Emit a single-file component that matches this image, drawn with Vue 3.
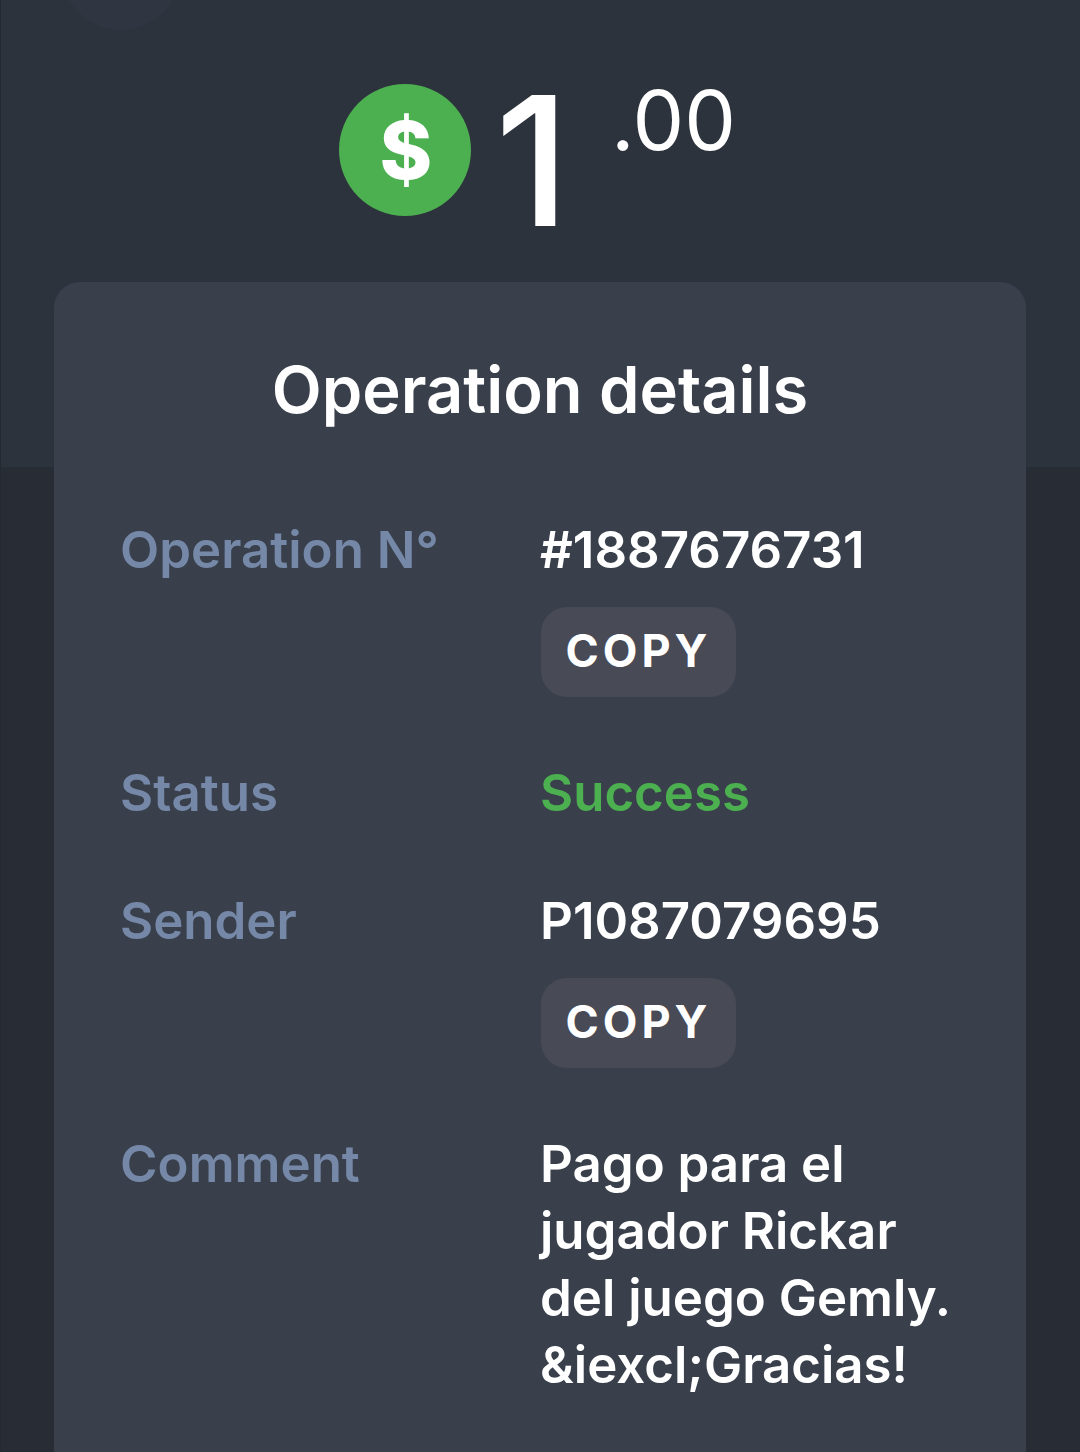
<template>
  <div class="page">
    <div class="header-bg">
      <div class="avatar-edge"></div>
    </div>
    <div class="amount">
      <div class="coin"><span>$</span></div>
      <div class="whole">1</div>
      <div class="cents">.00</div>
    </div>
    <div class="card">
      <h1 class="title">Operation details</h1>
      <div class="row" v-for="row in rows" :key="row.label">
        <div class="label">{{ row.label }}</div>
        <div class="value">
          <div :class="{ success: row.success }">
            <div v-for="line in row.lines" :key="line">{{ line }}</div>
          </div>
          <button v-if="row.copy" type="button" class="copy">COPY</button>
        </div>
      </div>
    </div>
  </div>
</template>

<script setup>
const rows = [
  { label: "Operation N°", lines: ["#1887676731"], copy: true },
  { label: "Status", lines: ["Success"], success: true },
  { label: "Sender", lines: ["P1087079695"], copy: true },
  {
    label: "Comment",
    lines: ["Pago para el", "jugador Rickar", "del juego Gemly.", "&iexcl;Gracias!"],
  },
];
</script>

<style>
html,
body {
  margin: 0;
  background: #282c35;
  overflow: hidden;
}
</style>

<style scoped>
.page {
  position: relative;
  width: 1080px;
  height: 1452px;
  overflow: hidden;
  font-family: Inter, "Open Sans", sans-serif;
  color: #fff;
  box-sizing: border-box;
  padding-top: 84px;
  background: #282c35;
  border-left: 1px solid #232935;
}
.header-bg {
  position: absolute;
  left: 0;
  right: 0;
  top: 0;
  height: 467px;
  background: #2d333d;
}
.avatar-edge {
  position: absolute;
  left: 60px;
  top: -90px;
  width: 120px;
  height: 120px;
  border-radius: 50%;
  background: #2f3541;
}
.amount {
  position: relative;
  display: flex;
  align-items: flex-start;
  height: 198px;
  padding-left: 338px;
}
.coin {
  width: 132px;
  height: 132px;
  box-sizing: border-box;
  padding-left: 2px;
  border-radius: 50%;
  background: #4caf50;
  display: flex;
  align-items: center;
  justify-content: center;
  font-size: 80px;
  font-weight: 800;
  line-height: 1;
}
.whole {
  margin-left: 24px;
  margin-top: -13px;
  width: 116px;
  font-size: 180px;
  line-height: 180px;
  font-weight: 500;
}
.cents {
  margin-top: -13px;
  font-size: 82px;
  line-height: 100px;
  font-weight: 400;
}
.card {
  position: relative;
  width: 972px;
  height: 1300px;
  margin-left: 53px;
  box-sizing: border-box;
  padding: 68px 66px 0 66px;
  background: #39404c;
  border-radius: 26px;
}
.title {
  margin: 0 0 86px;
  text-align: center;
  font-size: 65px;
  line-height: 80px;
  font-weight: 600;
}
.row {
  display: grid;
  grid-template-columns: 420px 1fr;
  font-size: 51px;
  line-height: 67px;
  margin-bottom: 61.6px;
}
.label {
  color: #7688a8;
  font-weight: 600;
}
.value {
  font-weight: 600;
}
.success {
  color: #4caf50;
}
.copy {
  display: block;
  width: 195px;
  height: 90px;
  margin: 24px 0 0 1px;
  border: 0;
  border-radius: 26px;
  background: #484a55;
  color: #fff;
  font-family: inherit;
  font-size: 45px;
  font-weight: 700;
  letter-spacing: 4px;
  padding: 0 0 4px;
}
</style>
